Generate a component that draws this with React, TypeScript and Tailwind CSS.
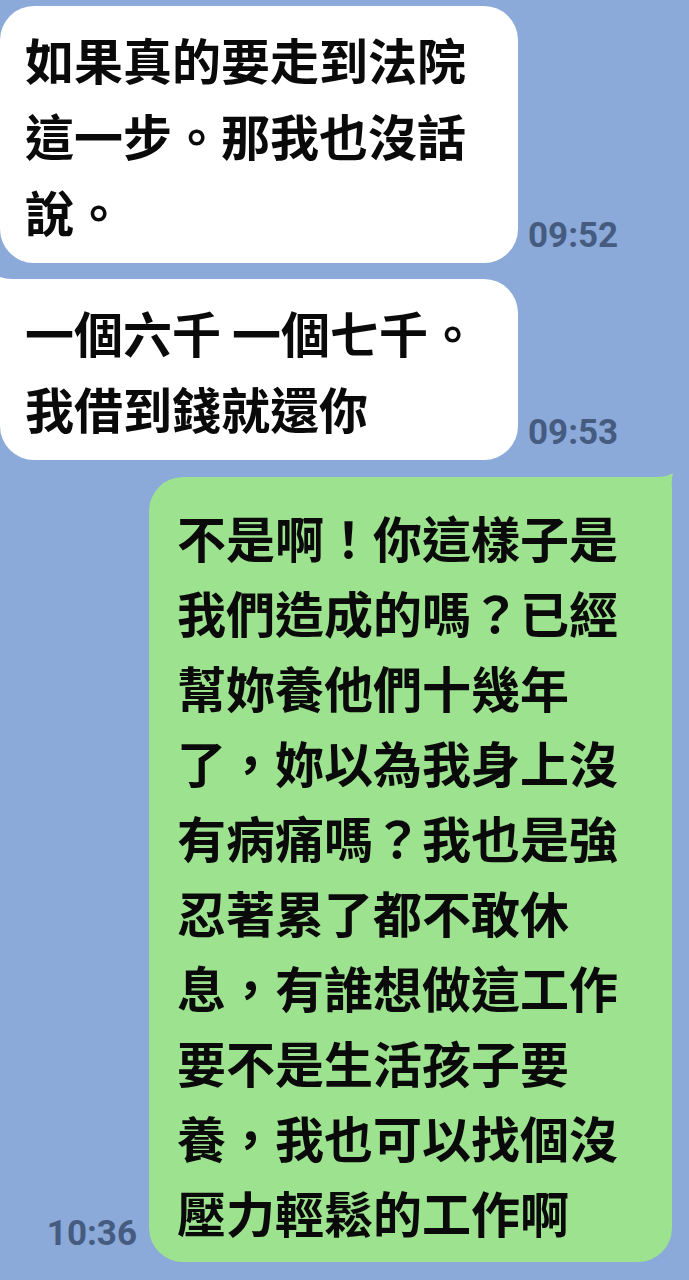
import React from 'react';

const incoming = [
  { lines: ['如果真的要走到法院', '這一步。那我也沒話', '說。'], time: '09:52', tail: false },
  { lines: ['一個六千 一個七千。', '我借到錢就還你'], time: '09:53', tail: true },
];

const outgoing = {
  lines: [
    '不是啊！你這樣子是',
    '我們造成的嗎？已經',
    '幫妳養他們十幾年',
    '了，妳以為我身上沒',
    '有病痛嗎？我也是強',
    '忍著累了都不敢休',
    '息，有誰想做這工作',
    '要不是生活孩子要',
    '養，我也可以找個沒',
    '壓力輕鬆的工作啊',
  ],
  time: '10:36',
};

function Time({ value, className }: { value: string; className?: string }) {
  return (
    <div
      className={`text-[35px] leading-none font-bold text-[#455c80] font-['Roboto',sans-serif] ${className ?? ''}`}
    >
      {value}
    </div>
  );
}

function Lines({ lines, tight }: { lines: string[]; tight?: boolean }) {
  return (
    <div
      className={`text-[49px] font-bold text-[#0a0a0a] whitespace-nowrap ${tight ? 'leading-[75px]' : 'leading-[76px]'}`}
    >
      {lines.map((line, i) => (
        <div key={i}>{line}</div>
      ))}
    </div>
  );
}

export default function App() {
  return (
    <div className="min-h-screen w-[689px] overflow-hidden bg-[#8ba9d9] font-['Noto_Sans_CJK_TC','Noto_Sans_CJK_SC',sans-serif]">
      <div className="flex flex-col pt-[6px] pb-[20px]">
        {incoming.map((msg, i) => (
          <div key={i} className={`flex items-end ${i > 0 ? 'mt-[16px]' : ''}`}>
            <div className="relative w-[518px] rounded-[34px] bg-white pl-[25px] pt-[15px] pb-[14px]">
              {msg.tail && (
                <svg className="absolute left-[-4px] top-[-3px]" width="40" height="40" viewBox="0 0 40 40">
                  <path d="M40 3 L16 3 Q8 3 2 0 Q4 6 4 14 L4 40 L40 40 Z" fill="#ffffff" />
                </svg>
              )}
              <Lines lines={msg.lines} />
            </div>
            <Time value={msg.time} className="ml-[10px] mb-[10px]" />
          </div>
        ))}

        <div className="mt-[17px] flex items-end justify-end pr-[17px]">
          <Time value={outgoing.time} className="mr-[12px] mb-[11px]" />
          <div className="relative w-[523px] rounded-[34px] bg-[#9de28f] pl-[28px] pr-[20px] pt-[22px] pb-[13px]">
            <svg className="absolute right-[-3px] top-[-4px]" width="40" height="40" viewBox="0 0 40 40">
              <path d="M0 4 L22 4 Q32 4 38 0 Q36 8 37 16 L37 40 L0 40 Z" fill="#9de28f" />
            </svg>
            <div className="relative">
              <Lines lines={outgoing.lines} tight />
            </div>
          </div>
        </div>
      </div>
    </div>
  );
}
